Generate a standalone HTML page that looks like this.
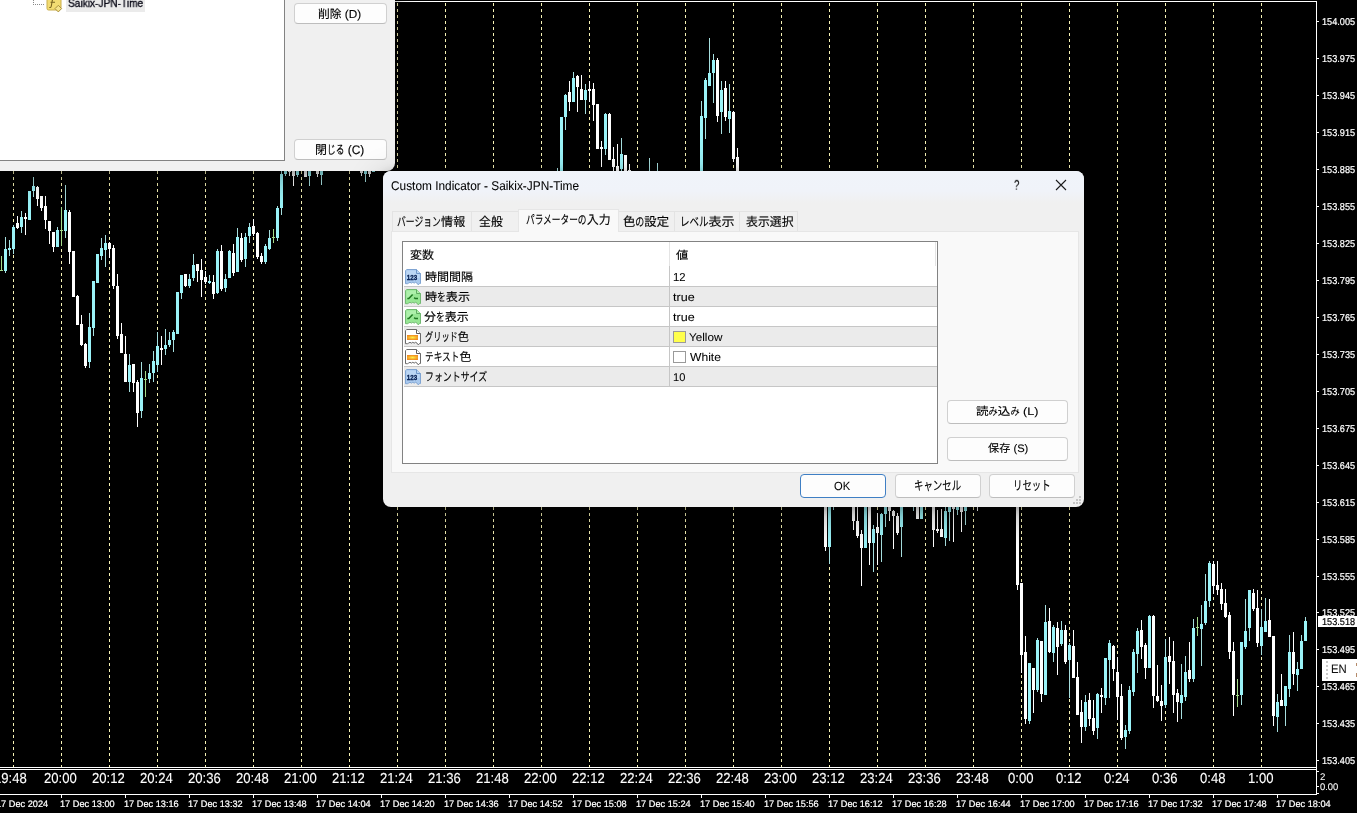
<!DOCTYPE html>
<html lang="ja"><head><meta charset="utf-8"><title>Custom Indicator - Saikix-JPN-Time</title>
<style>
html,body{margin:0;padding:0;background:#000;}
body{width:1357px;height:813px;position:relative;overflow:hidden;font-family:"Liberation Sans","Noto Sans CJK JP",sans-serif;}
#root{position:absolute;left:0;top:0;width:1357px;height:813px;overflow:hidden;will-change:transform;}
.chart{position:absolute;left:0;top:0;}
.t{position:absolute;white-space:nowrap;line-height:1;transform-origin:0 0;}
.ui{font-family:"Liberation Sans","Noto Sans CJK JP",sans-serif;}
.ar{font-family:"Liberation Sans",sans-serif;}
.abs{position:absolute;box-sizing:border-box;}
.btn{position:absolute;box-sizing:border-box;background:#fdfdfd;border:1px solid #d0d0d0;border-bottom-color:#bdbdbd;border-radius:4px;}
.tab{position:absolute;box-sizing:border-box;background:#f0f0f0;border:1px solid #e3e3e3;border-bottom:none;}
.ic{position:absolute;left:405px;}
.k{display:inline-block;white-space:nowrap}.k>i{display:inline-block;font-style:normal;transform:scaleX(0.73);transform-origin:0 50%}
</style></head><body><div id="root">
<svg class="chart" width="1357" height="813" viewBox="0 0 1357 813" shape-rendering="crispEdges">
<path d="M13.5 3V767M61.5 3V767M109.5 3V767M157.5 3V767M205.5 3V767M253.5 3V767M301.5 3V767M349.5 3V767M397.5 3V767M445.5 3V767M493.5 3V767M541.5 3V767M589.5 3V767M637.5 3V767M685.5 3V767M733.5 3V767M781.5 3V767M829.5 3V767M877.5 3V767M925.5 3V767M973.5 3V767M1021.5 3V767M1069.5 3V767M1117.5 3V767M1165.5 3V767M1213.5 3V767M1261.5 3V767" stroke="#f5f1b4" stroke-width="1" stroke-dasharray="3 3" fill="none"/>
<path d="M5.5 237V249M5.5 271V273M9.5 240V248M9.5 250V256M13.5 225V227M13.5 249V254M21.5 211V217M21.5 227V233M33.5 177V186M33.5 191V197M57.5 227V230M65.5 185V210M65.5 231V238M89.5 313V327M89.5 362V368M93.5 328V336M101.5 238V248M101.5 256V260M105.5 235V243M105.5 250V267M129.5 354V365M129.5 382V392M141.5 362V378M141.5 411V418M149.5 364V373M149.5 379V383M153.5 351V361M153.5 373V382M157.5 332V346M157.5 365V372M165.5 329V345M165.5 349V355M169.5 332V340M169.5 345V347M173.5 330V332M173.5 340V352M181.5 293V299M189.5 274V279M189.5 286V288M193.5 254V265M193.5 278V281M209.5 275V281M209.5 283V284M217.5 249V251M217.5 293V294M225.5 274V279M225.5 288V292M229.5 250V251M237.5 228V237M245.5 233V237M245.5 259V267M249.5 223V227M249.5 236V243M265.5 244V246M265.5 262V264M269.5 230V238M269.5 249V250M277.5 206V208M277.5 238V241M281.5 168V174M281.5 208V215M285.5 174V176M297.5 175V177M309.5 176V186M321.5 175V185M365.5 174V182M557.5 168V172M565.5 94V95M565.5 117V130M573.5 72V78M585.5 84V90M585.5 100V114M605.5 113V114M605.5 149V155M621.5 138V154M621.5 169V175M649.5 158V172M657.5 163V172M701.5 101V116M705.5 78V80M705.5 118V139M709.5 38V73M713.5 54V60M713.5 73V103M721.5 81V90M721.5 112V134M729.5 84V111M729.5 119V133M829.5 547V564M833.5 503V510M873.5 525V529M873.5 543V572M881.5 513V514M881.5 535V562M885.5 514V527M901.5 527V557M913.5 503V511M945.5 505V511M945.5 538V546M949.5 512V541M957.5 510V515M965.5 511V525M1029.5 721V724M1037.5 638V640M1037.5 690V692M1045.5 605V622M1053.5 625V627M1053.5 653V662M1061.5 621V630M1061.5 644V646M1069.5 643V645M1069.5 660V698M1085.5 695V702M1085.5 727V731M1097.5 693V694M1097.5 728V739M1105.5 698V705M1109.5 640V643M1109.5 660V698M1125.5 725V730M1125.5 737V749M1129.5 686V690M1129.5 731V734M1133.5 649V652M1133.5 692V696M1137.5 628V631M1137.5 654V673M1149.5 615V616M1165.5 639V657M1165.5 705V708M1181.5 664V695M1181.5 703V719M1185.5 656V672M1185.5 697V701M1193.5 619V628M1193.5 679V682M1201.5 605V624M1201.5 629V666M1205.5 574V601M1205.5 623V625M1209.5 561V563M1209.5 601V607M1241.5 695V705M1245.5 599V631M1245.5 647V649M1249.5 628V641M1261.5 609V627M1261.5 646V655M1265.5 598V621M1277.5 694V702M1277.5 717V732M1285.5 706V726M1289.5 635V652M1289.5 689V697M1297.5 662V669M1297.5 675V691M1301.5 635V641M1305.5 617V621" stroke="#a6dede" stroke-width="1" fill="none"/>
<path d="M17.5 216V223M17.5 228V229M25.5 213V217M25.5 219V235M37.5 186V187M37.5 199V206M41.5 208V211M45.5 196V206M45.5 220V229M49.5 231V244M53.5 247V252M69.5 210V212M69.5 252V264M77.5 295V296M81.5 315V324M81.5 345V346M85.5 343V344M85.5 366V368M109.5 242V243M109.5 249V258M113.5 245V248M113.5 286V289M117.5 274V286M117.5 336V339M121.5 323V334M125.5 336V354M133.5 383V392M137.5 380V382M137.5 413V427M161.5 336V348M161.5 350V365M185.5 286V287M197.5 271V282M201.5 259V270M201.5 280V297M205.5 271V277M205.5 282V284M213.5 275V282M213.5 294V299M221.5 245V251M221.5 289V291M233.5 244V253M233.5 273V276M241.5 233V238M241.5 260V262M253.5 219V226M253.5 234V236M257.5 232V233M257.5 257V259M261.5 253V256M261.5 262V264M289.5 172V176M293.5 176V186M317.5 174V177M361.5 173V176M369.5 174V177M569.5 81V92M569.5 102V111M577.5 75V76M577.5 87V112M581.5 75V89M589.5 81V89M589.5 91V102M593.5 83V89M593.5 105V121M601.5 141V147M601.5 149V167M609.5 113V114M613.5 147V159M613.5 167V175M617.5 144V166M629.5 164V170M717.5 58V60M717.5 116V122M725.5 81V88M725.5 117V121M733.5 111V112M733.5 159V162M737.5 148V157M825.5 547V551M853.5 521V530M857.5 500V521M857.5 536V538M861.5 530V534M861.5 548V586M869.5 543V565M877.5 513V527M877.5 533V565M889.5 511V521M893.5 510V511M893.5 516V549M897.5 513V516M897.5 533V535M933.5 530V547M937.5 510V529M937.5 531V533M941.5 509V529M953.5 509V542M961.5 512V532M977.5 503V511M1017.5 585V590M1021.5 655V673M1025.5 636V652M1025.5 719V724M1033.5 690V713M1041.5 694V702M1049.5 608V621M1049.5 652V653M1057.5 622V628M1057.5 647V675M1065.5 625V630M1065.5 662V664M1073.5 630V646M1077.5 662V677M1081.5 700V712M1081.5 727V743M1089.5 693V700M1089.5 719V726M1093.5 700V718M1093.5 731V735M1101.5 688V695M1101.5 697V713M1113.5 645V646M1113.5 669V681M1117.5 657V672M1117.5 697V720M1121.5 684V696M1121.5 738V740M1141.5 620V630M1141.5 647V659M1145.5 643V645M1145.5 668V679M1153.5 615V616M1153.5 696V708M1157.5 665V696M1157.5 701V702M1161.5 685V701M1161.5 706V721M1169.5 637V656M1169.5 662V684M1173.5 641V661M1173.5 695V713M1177.5 689V693M1177.5 702V722M1189.5 642V670M1189.5 679V682M1213.5 561V564M1213.5 586V594M1217.5 561V585M1217.5 590V595M1221.5 583V589M1221.5 604V610M1225.5 589V603M1225.5 617V618M1229.5 612V615M1229.5 652V659M1233.5 642V651M1233.5 695V716M1253.5 589V593M1253.5 609V611M1257.5 590V608M1257.5 643V647M1269.5 599V620M1273.5 716V726M1281.5 674V700M1293.5 632V652M1293.5 674V685" stroke="#ffffff" stroke-width="1" fill="none"/>
<path d="M1.5 256V271M0 270.5H3M61.5 207V246M60 230.5H63M145.5 371V397M144 379.5H147M273.5 229V243M272 237.5H275M1197.5 617V636M1196 627.5H1199M1237.5 679V707M1236 695.5H1239" stroke="#a4da8a" stroke-width="1" fill="none"/>
<path d="M4 249h3V271h-3zM8 248h3V250h-3zM12 227h3V249h-3zM20 217h3V227h-3zM28 191h3V220h-3zM32 186h3V191h-3zM56 230h3V247h-3zM64 210h3V231h-3zM88 327h3V362h-3zM92 281h3V328h-3zM96 254h3V283h-3zM100 248h3V256h-3zM104 243h3V250h-3zM128 365h3V382h-3zM140 378h3V411h-3zM148 373h3V379h-3zM152 361h3V373h-3zM156 346h3V365h-3zM164 345h3V349h-3zM168 340h3V345h-3zM172 332h3V340h-3zM176 292h3V334h-3zM180 275h3V293h-3zM188 279h3V286h-3zM192 265h3V278h-3zM208 281h3V283h-3zM216 251h3V293h-3zM224 279h3V288h-3zM228 251h3V278h-3zM236 237h3V272h-3zM244 237h3V259h-3zM248 227h3V236h-3zM264 246h3V262h-3zM268 238h3V249h-3zM276 208h3V238h-3zM280 174h3V208h-3zM284 160h3V174h-3zM296 160h3V175h-3zM308 160h3V176h-3zM320 160h3V175h-3zM364 160h3V174h-3zM372 160h3V172h-3zM556 172h3V175h-3zM560 117h3V175h-3zM564 95h3V117h-3zM572 78h3V102h-3zM584 90h3V100h-3zM604 114h3V149h-3zM620 154h3V169h-3zM648 172h3V175h-3zM656 172h3V175h-3zM700 116h3V175h-3zM704 80h3V118h-3zM708 73h3V86h-3zM712 60h3V73h-3zM720 90h3V112h-3zM728 111h3V119h-3zM828 500h3V547h-3zM832 500h3V503h-3zM864 500h3V548h-3zM872 529h3V543h-3zM880 514h3V535h-3zM884 500h3V514h-3zM900 500h3V527h-3zM912 500h3V503h-3zM920 500h3V519h-3zM944 511h3V538h-3zM948 500h3V512h-3zM956 500h3V510h-3zM964 500h3V511h-3zM1028 663h3V721h-3zM1036 640h3V690h-3zM1044 622h3V695h-3zM1052 627h3V653h-3zM1060 630h3V644h-3zM1068 645h3V660h-3zM1084 702h3V727h-3zM1096 694h3V728h-3zM1104 658h3V698h-3zM1108 643h3V660h-3zM1124 730h3V737h-3zM1128 690h3V731h-3zM1132 652h3V692h-3zM1136 631h3V654h-3zM1148 616h3V668h-3zM1164 657h3V705h-3zM1180 695h3V703h-3zM1184 672h3V697h-3zM1192 628h3V679h-3zM1200 624h3V629h-3zM1204 601h3V623h-3zM1208 563h3V601h-3zM1240 642h3V695h-3zM1244 631h3V647h-3zM1248 590h3V628h-3zM1260 627h3V646h-3zM1264 621h3V632h-3zM1276 702h3V717h-3zM1284 686h3V706h-3zM1288 652h3V689h-3zM1296 669h3V675h-3zM1300 641h3V669h-3zM1304 621h3V641h-3z" fill="#9af3f8"/>
<path d="M16 223h3V228h-3zM24 217h3V219h-3zM36 187h3V199h-3zM40 196h3V208h-3zM44 206h3V220h-3zM48 221h3V231h-3zM52 232h3V247h-3zM68 212h3V252h-3zM72 251h3V297h-3zM76 296h3V325h-3zM80 324h3V345h-3zM84 344h3V366h-3zM108 243h3V249h-3zM112 248h3V286h-3zM116 286h3V336h-3zM120 334h3V353h-3zM124 354h3V382h-3zM132 364h3V383h-3zM136 382h3V413h-3zM160 348h3V350h-3zM184 274h3V286h-3zM196 264h3V271h-3zM200 270h3V280h-3zM204 277h3V282h-3zM212 282h3V294h-3zM220 251h3V289h-3zM232 253h3V273h-3zM240 238h3V260h-3zM252 226h3V234h-3zM256 233h3V257h-3zM260 256h3V262h-3zM288 160h3V172h-3zM292 160h3V176h-3zM304 160h3V177h-3zM316 160h3V174h-3zM360 160h3V173h-3zM368 160h3V174h-3zM568 92h3V102h-3zM576 76h3V87h-3zM580 89h3V100h-3zM588 89h3V91h-3zM592 89h3V105h-3zM596 104h3V149h-3zM600 147h3V149h-3zM608 114h3V160h-3zM612 159h3V167h-3zM616 166h3V175h-3zM624 155h3V175h-3zM628 170h3V175h-3zM716 60h3V116h-3zM724 88h3V117h-3zM732 112h3V159h-3zM736 157h3V175h-3zM824 500h3V547h-3zM852 500h3V521h-3zM856 521h3V536h-3zM860 534h3V548h-3zM868 500h3V543h-3zM876 527h3V533h-3zM888 500h3V511h-3zM892 511h3V516h-3zM896 516h3V533h-3zM916 500h3V519h-3zM932 500h3V530h-3zM936 529h3V531h-3zM940 529h3V537h-3zM952 500h3V509h-3zM960 500h3V512h-3zM976 500h3V503h-3zM1016 500h3V585h-3zM1020 583h3V655h-3zM1024 652h3V719h-3zM1032 668h3V690h-3zM1040 641h3V694h-3zM1048 621h3V652h-3zM1056 628h3V647h-3zM1064 630h3V662h-3zM1072 646h3V678h-3zM1076 677h3V715h-3zM1080 712h3V727h-3zM1088 700h3V719h-3zM1092 718h3V731h-3zM1100 695h3V697h-3zM1112 646h3V669h-3zM1116 672h3V697h-3zM1120 696h3V738h-3zM1140 630h3V647h-3zM1144 645h3V668h-3zM1152 616h3V696h-3zM1156 696h3V701h-3zM1160 701h3V706h-3zM1168 656h3V662h-3zM1172 661h3V695h-3zM1176 693h3V702h-3zM1188 670h3V679h-3zM1212 564h3V586h-3zM1216 585h3V590h-3zM1220 589h3V604h-3zM1224 603h3V617h-3zM1228 615h3V652h-3zM1232 651h3V695h-3zM1252 593h3V609h-3zM1256 608h3V643h-3zM1268 620h3V637h-3zM1272 636h3V716h-3zM1280 700h3V706h-3zM1292 652h3V674h-3z" fill="#ffffff"/>
<path d="M0 1.5H1317 M1316.5 1V795 M0 767.5H1317 M0 769.5H1317 M0 794.5H1317 M1317 21.5H1319 M1317 58.5H1319 M1317 95.5H1319 M1317 132.5H1319 M1317 169.5H1319 M1317 206.5H1319 M1317 243.5H1319 M1317 280.5H1319 M1317 317.5H1319 M1317 354.5H1319 M1317 391.5H1319 M1317 428.5H1319 M1317 465.5H1319 M1317 502.5H1319 M1317 539.5H1319 M1317 576.5H1319 M1317 612.5H1319 M1317 649.5H1319 M1317 686.5H1319 M1317 723.5H1319 M1317 760.5H1319 M1317 771.5H1319 M1317 786.5H1319 M1317 793.5H1319 M-3.5 795V798 M61.5 795V798 M125.5 795V798 M189.5 795V798 M253.5 795V798 M317.5 795V798 M381.5 795V798 M445.5 795V798 M509.5 795V798 M573.5 795V798 M637.5 795V798 M701.5 795V798 M765.5 795V798 M829.5 795V798 M893.5 795V798 M957.5 795V798 M1021.5 795V798 M1085.5 795V798 M1149.5 795V798 M1213.5 795V798 M1277.5 795V798" stroke="#ffffff" stroke-width="1" fill="none"/>
</svg>
<div class="abs" style="left:1318px;top:616px;width:39px;height:11px;background:#fff"></div>
<div class="abs" style="left:1322px;top:659px;width:35px;height:22px;background:#fff"></div>
<div class="abs" style="left:1326px;top:661px;width:2px;height:18px;background:repeating-linear-gradient(#c9c9c9 0 2px,#fff 2px 4px)"></div>
<div class="abs" style="left:1356px;top:663px;width:1px;height:3px;background:#b58a6a"></div>
<div class="abs" style="left:1356px;top:673px;width:1px;height:4px;background:#b58a6a"></div>
<div class="abs" style="left:-20px;top:-20px;width:415px;height:191px;background:#f0f0f0;border-radius:0 0 8px 0;box-shadow:0 8px 32px rgba(0,0,0,.30),0 2px 10px rgba(0,0,0,.22)"></div>
<div class="abs" style="left:-20px;top:-20px;width:305px;height:181px;background:#fff;border:1px solid #828282"></div>
<div class="abs" style="left:66px;top:0;width:79px;height:11.5px;background:#ebebeb"></div>
<svg class="abs" style="left:30px;top:0" width="34" height="13" viewBox="0 0 34 13"><path d="M3.5 0V4M3 4.5H14" stroke="#8a8a8a" stroke-dasharray="1 1" fill="none"/><path d="M17 -2H29.5Q31 -2 31 -.5V7.5L28.5 10H18.5Q17 10 17 8.5z" fill="#f3dc72" stroke="#c9ae4c"/><path d="M28.3 5.3L31.6 8.6 28.3 11.9 25 8.6z" fill="#f6e38a" stroke="#a88f3c"/><path d="M25 -1Q22.5 -1.5 22.2 1L21.3 6Q21 8 19.3 7.4M20.5 2.2H25" fill="none" stroke="#7a6420" stroke-width="1.1"/></svg>
<div class="btn" style="left:294px;top:3px;width:93px;height:21px"></div>
<div class="btn" style="left:294px;top:139px;width:93px;height:21px"></div>
<div class="abs" style="left:383px;top:171px;width:701px;height:336px;background:#f0f0f0;border-radius:8px;box-shadow:0 10px 36px rgba(0,0,0,.32),0 2px 10px rgba(0,0,0,.22);overflow:hidden"><div class="abs" style="left:0;top:0;width:701px;height:34px;background:linear-gradient(#f0f4fa 0,#f0f3f9 20px,#f0f0f0 32px)"></div></div>
<svg class="abs" style="left:1054px;top:178px" width="14" height="14" viewBox="0 0 14 14"><path d="M2 2L12 12M12 2L2 12" stroke="#1b1b1b" stroke-width="1.1" fill="none"/></svg>
<div class="abs" style="left:391px;top:231px;width:688px;height:242px;background:#f9f9f9;border:1px solid #e6e6e6"></div>
<div class="tab" style="left:392px;top:211px;width:80px;height:20px"></div>
<div class="tab" style="left:471px;top:211px;width:48px;height:20px"></div>
<div class="tab" style="left:618px;top:211px;width:57px;height:20px"></div>
<div class="tab" style="left:674px;top:211px;width:66px;height:20px"></div>
<div class="tab" style="left:739px;top:211px;width:59px;height:20px"></div>
<div class="abs" style="left:518px;top:209px;width:101px;height:23px;background:#f9f9f9;border:1px solid #e6e6e6;border-bottom:none"></div>
<div class="abs" style="left:402px;top:241px;width:536px;height:223px;background:#fff;border:1px solid #828282"></div>
<div class="abs" style="left:404px;top:267px;width:532.5px;height:20px;background:#fff;border-bottom:1px solid #c6c6c6"></div>
<div class="abs" style="left:404px;top:287px;width:532.5px;height:20px;background:#ebebeb;border-bottom:1px solid #c6c6c6"></div>
<div class="abs" style="left:404px;top:307px;width:532.5px;height:20px;background:#fff;border-bottom:1px solid #c6c6c6"></div>
<div class="abs" style="left:404px;top:327px;width:532.5px;height:20px;background:#ebebeb;border-bottom:1px solid #c6c6c6"></div>
<div class="abs" style="left:404px;top:347px;width:532.5px;height:20px;background:#fff;border-bottom:1px solid #c6c6c6"></div>
<div class="abs" style="left:404px;top:367px;width:532.5px;height:20px;background:#ebebeb;border-bottom:1px solid #c6c6c6"></div>
<div class="abs" style="left:669px;top:242px;width:1px;height:24px;background:#e4e4e4"></div>
<div class="abs" style="left:935px;top:242px;width:1px;height:24px;background:#e4e4e4"></div>
<div class="abs" style="left:669px;top:266px;width:1px;height:121px;background:#c6c6c6"></div>
<svg class="ic" style="top:269px" viewBox="0 0 16 16" width="16" height="16"><path d="M1.7 .5H11.5L15.5 4.5V14.5H14.5L13.3 15.9 12 14.1 10.6 13.3 9.2 14.1 7.8 13.3 6.4 14.1 5 13.3 3.6 14.1 2.6 14.7H.5V1.7z" fill="#a9c9ee" stroke="#7fa4d2"/><path d="M1.5 1.5H11V5H14.5V9H1.5z" fill="#c3dbf6" opacity=".7"/><path d="M11.5 .5V4.5H15.5" fill="#bcd6f3" stroke="#6f97c9"/><text x="7" y="11.2" text-anchor="middle" font-family="Liberation Sans,sans-serif" font-weight="bold" font-size="7" fill="#061f52" stroke="#061f52" stroke-width=".3" textLength="10.4" lengthAdjust="spacingAndGlyphs">123</text></svg>
<svg class="ic" style="top:289px" viewBox="0 0 16 16" width="16" height="16"><path d="M1.7 .5H11.5L15.5 4.5V14.5H14.5L13.3 15.9 12 14.1 10.6 13.3 9.2 14.1 7.8 13.3 6.4 14.1 5 13.3 3.6 14.1 2.6 14.7H.5V1.7z" fill="#97e694" stroke="#72b972"/><path d="M1.5 1.5H11V5H8L3 10H1.5z" fill="#b4f3b0" opacity=".8"/><path d="M11.5 .5V4.5H15.5" fill="#b0f0ac" stroke="#5fae60"/><path d="M2.3 9.5H3.8L7.6 5.5" fill="none" stroke="#1f7a22" stroke-width="1.5"/><path d="M9.2 8.7L10.2 9.5H13" fill="none" stroke="#1f7a22" stroke-width="1.5"/></svg>
<svg class="ic" style="top:309px" viewBox="0 0 16 16" width="16" height="16"><path d="M1.7 .5H11.5L15.5 4.5V14.5H14.5L13.3 15.9 12 14.1 10.6 13.3 9.2 14.1 7.8 13.3 6.4 14.1 5 13.3 3.6 14.1 2.6 14.7H.5V1.7z" fill="#97e694" stroke="#72b972"/><path d="M1.5 1.5H11V5H8L3 10H1.5z" fill="#b4f3b0" opacity=".8"/><path d="M11.5 .5V4.5H15.5" fill="#b0f0ac" stroke="#5fae60"/><path d="M2.3 9.5H3.8L7.6 5.5" fill="none" stroke="#1f7a22" stroke-width="1.5"/><path d="M9.2 8.7L10.2 9.5H13" fill="none" stroke="#1f7a22" stroke-width="1.5"/></svg>
<svg class="ic" style="top:329px" viewBox="0 0 16 16" width="16" height="16"><defs><radialGradient id="ogo1" cx=".5" cy=".5" r=".6" gradientTransform="matrix(1 0 0 .8 0 .1)"><stop offset="0" stop-color="#fff04a"/><stop offset=".55" stop-color="#f7b52e"/><stop offset="1" stop-color="#ee8c22"/></radialGradient></defs><path d="M1.7 .5H11.5L15.5 4.5V14.5H14.5L13.3 15.9 12 14.1 10.6 13.3 9.2 14.1 7.8 13.3 6.4 14.1 5 13.3 3.6 14.1 2.6 14.7H.5V1.7z" fill="#ffffff" stroke="#6a6a6a"/><path d="M11.5 .5V4.5H15.5" fill="#fff" stroke="#5c5c5c"/><rect x="2" y="6" width="11" height="5" fill="url(#ogo1)"/></svg>
<svg class="ic" style="top:349px" viewBox="0 0 16 16" width="16" height="16"><defs><radialGradient id="ogo2" cx=".5" cy=".5" r=".6" gradientTransform="matrix(1 0 0 .8 0 .1)"><stop offset="0" stop-color="#fff04a"/><stop offset=".55" stop-color="#f7b52e"/><stop offset="1" stop-color="#ee8c22"/></radialGradient></defs><path d="M1.7 .5H11.5L15.5 4.5V14.5H14.5L13.3 15.9 12 14.1 10.6 13.3 9.2 14.1 7.8 13.3 6.4 14.1 5 13.3 3.6 14.1 2.6 14.7H.5V1.7z" fill="#ffffff" stroke="#6a6a6a"/><path d="M11.5 .5V4.5H15.5" fill="#fff" stroke="#5c5c5c"/><rect x="2" y="6" width="11" height="5" fill="url(#ogo2)"/></svg>
<svg class="ic" style="top:369px" viewBox="0 0 16 16" width="16" height="16"><path d="M1.7 .5H11.5L15.5 4.5V14.5H14.5L13.3 15.9 12 14.1 10.6 13.3 9.2 14.1 7.8 13.3 6.4 14.1 5 13.3 3.6 14.1 2.6 14.7H.5V1.7z" fill="#a9c9ee" stroke="#7fa4d2"/><path d="M1.5 1.5H11V5H14.5V9H1.5z" fill="#c3dbf6" opacity=".7"/><path d="M11.5 .5V4.5H15.5" fill="#bcd6f3" stroke="#6f97c9"/><text x="7" y="11.2" text-anchor="middle" font-family="Liberation Sans,sans-serif" font-weight="bold" font-size="7" fill="#061f52" stroke="#061f52" stroke-width=".3" textLength="10.4" lengthAdjust="spacingAndGlyphs">123</text></svg>
<div class="abs" style="left:673px;top:331px;width:12.5px;height:12px;background:#ffff4d;border:1px solid #9a9a9a"></div>
<div class="abs" style="left:673px;top:351px;width:12.5px;height:12px;background:#fff;border:1px solid #9a9a9a"></div>
<div class="btn" style="left:947px;top:400px;width:121px;height:24px"></div>
<div class="btn" style="left:947px;top:437px;width:121px;height:24px"></div>
<div class="btn" style="left:800px;top:474px;width:86px;height:24px;border-color:#3f7fc4"></div>
<div class="btn" style="left:895px;top:474px;width:86px;height:24px"></div>
<div class="btn" style="left:989px;top:474px;width:86px;height:24px"></div>
<svg class="abs" style="left:1071px;top:494px" width="12" height="12" viewBox="0 0 12 12"><path d="M8 2h2v2h-2zM5 5h2v2h-2zM8 5h2v2h-2zM2 8h2v2h-2zM5 8h2v2h-2zM8 8h2v2h-2z" fill="#c4c4c4"/></svg>
<span class="t ui" style="left:391.25px;top:179.00px;font-size:12px;color:#000000;transform:matrix(0.9886,0,0.001,1.0556,0,0);-webkit-text-stroke:0.06px;">Custom Indicator - Saikix-JPN-Time</span>
<span class="t ui" style="left:397.25px;top:216.00px;font-size:12px;color:#000000;transform:matrix(1.0060,0,0.001,1.0222,0,0);-webkit-text-stroke:0.14px;"><span class="k" style="width:43.8px"><i>バージョン</i></span>情報</span>
<span class="t ui" style="left:478.50px;top:216.00px;font-size:12px;color:#000000;transform:matrix(0.9892,0,0.001,1.0222,0,0);-webkit-text-stroke:0.14px;">全般</span>
<span class="t ui" style="left:526.25px;top:214.00px;font-size:12px;color:#000000;transform:matrix(0.9910,0,0.001,1.0222,0,0);-webkit-text-stroke:0.14px;"><span class="k" style="width:61.32px"><i>パラメーターの</i></span>入力</span>
<span class="t ui" style="left:623.25px;top:216.00px;font-size:12px;color:#000000;transform:matrix(1.0263,0,0.001,1.0222,0,0);-webkit-text-stroke:0.14px;">色<span class="k" style="width:8.76px"><i>の</i></span>設定</span>
<span class="t ui" style="left:679.50px;top:216.00px;font-size:12px;color:#000000;transform:matrix(1.0869,0,0.001,1.0222,0,0);-webkit-text-stroke:0.14px;"><span class="k" style="width:26.28px"><i>レベル</i></span>表示</span>
<span class="t ui" style="left:746.25px;top:216.00px;font-size:12px;color:#000000;transform:matrix(0.9895,0,0.001,1.0222,0,0);-webkit-text-stroke:0.14px;">表示選択</span>
<span class="t ui" style="left:410.25px;top:249.00px;font-size:12px;color:#000000;transform:matrix(0.9978,0,0.001,0.9511,0,0);-webkit-text-stroke:0.14px;">変数</span>
<span class="t ui" style="left:676.00px;top:250.00px;font-size:12px;color:#000000;transform:matrix(1.0222,0,0.001,0.9244,0,0);-webkit-text-stroke:0.14px;">値</span>
<span class="t ui" style="left:425.00px;top:271.00px;font-size:12px;color:#000000;transform:matrix(1.0022,0,0.001,0.9778,0,0);-webkit-text-stroke:0.14px;">時間間隔</span>
<span class="t ui" style="left:425.00px;top:291.00px;font-size:12px;color:#000000;transform:matrix(1.0046,0,0.001,0.9778,0,0);-webkit-text-stroke:0.14px;">時<span class="k" style="width:8.76px"><i>を</i></span>表示</span>
<span class="t ui" style="left:424.00px;top:311.00px;font-size:12px;color:#000000;transform:matrix(0.9977,0,0.001,0.9778,0,0);-webkit-text-stroke:0.14px;">分<span class="k" style="width:8.76px"><i>を</i></span>表示</span>
<span class="t ui" style="left:425.25px;top:331.00px;font-size:12px;color:#000000;transform:matrix(0.9348,0,0.001,0.9778,0,0);-webkit-text-stroke:0.14px;"><span class="k" style="width:35.04px"><i>グリッド</i></span>色</span>
<span class="t ui" style="left:425.00px;top:351.00px;font-size:12px;color:#000000;transform:matrix(0.9880,0,0.001,0.9778,0,0);-webkit-text-stroke:0.14px;"><span class="k" style="width:35.04px"><i>テキスト</i></span>色</span>
<span class="t ui" style="left:424.50px;top:371.00px;font-size:12px;color:#000000;transform:matrix(1.0168,0,0.001,1.0000,0,0);-webkit-text-stroke:0.14px;"><span class="k" style="width:61.32px"><i>フォントサイズ</i></span></span>
<span class="t ui" style="left:673.00px;top:271.00px;font-size:12px;color:#000000;transform:matrix(0.9447,0,0.001,0.9647,0,0);-webkit-text-stroke:0.06px;">12</span>
<span class="t ui" style="left:673.00px;top:291.00px;font-size:12px;color:#000000;transform:matrix(1.0450,0,0.001,0.9625,0,0);-webkit-text-stroke:0.06px;">true</span>
<span class="t ui" style="left:673.00px;top:311.00px;font-size:12px;color:#000000;transform:matrix(1.0450,0,0.001,0.9625,0,0);-webkit-text-stroke:0.06px;">true</span>
<span class="t ui" style="left:689.25px;top:332.00px;font-size:12px;color:#000000;transform:matrix(0.9765,0,0.001,0.9333,0,0);-webkit-text-stroke:0.06px;">Yellow</span>
<span class="t ui" style="left:689.50px;top:351.00px;font-size:12px;color:#000000;transform:matrix(1.0083,0,0.001,0.9556,0,0);-webkit-text-stroke:0.06px;">White</span>
<span class="t ui" style="left:673.00px;top:372.00px;font-size:12px;color:#000000;transform:matrix(0.9250,0,0.001,0.9371,0,0);-webkit-text-stroke:0.06px;">10</span>
<span class="t ui" style="left:975.75px;top:406.00px;font-size:12px;color:#000000;transform:matrix(1.0468,0,0.001,0.9098,0,0);-webkit-text-stroke:0.14px;">読<span class="k" style="width:8.76px"><i>み</i></span>込<span class="k" style="width:8.76px"><i>み</i></span> (L)</span>
<span class="t ui" style="left:987.50px;top:443.00px;font-size:12px;color:#000000;transform:matrix(0.9294,0,0.001,0.9098,0,0);-webkit-text-stroke:0.14px;">保存 (S)</span>
<span class="t ui" style="left:834.25px;top:480.00px;font-size:12px;color:#000000;transform:matrix(0.9313,0,0.001,0.9829,0,0);-webkit-text-stroke:0.06px;">OK</span>
<span class="t ui" style="left:914.25px;top:480.00px;font-size:12px;color:#000000;transform:matrix(1.0753,0,0.001,1.0419,0,0);-webkit-text-stroke:0.14px;"><span class="k" style="width:43.8px"><i>キャンセル</i></span></span>
<span class="t ui" style="left:1012.75px;top:479.00px;font-size:12px;color:#000000;transform:matrix(1.0719,0,0.001,1.0667,0,0);-webkit-text-stroke:0.14px;"><span class="k" style="width:35.04px"><i>リセット</i></span></span>
<span class="t ui" style="left:1013.75px;top:178.00px;font-size:12px;color:#000000;transform:matrix(0.8000,0,0.001,1.1529,0,0);-webkit-text-stroke:0.06px;">?</span>
<span class="t ui" style="left:317.75px;top:8.00px;font-size:12px;color:#000000;transform:matrix(0.9812,0,0.001,0.9569,0,0);-webkit-text-stroke:0.14px;">削除 (D)</span>
<span class="t ui" style="left:314.50px;top:144.00px;font-size:12px;color:#000000;transform:matrix(0.9948,0,0.001,1.0286,0,0);-webkit-text-stroke:0.14px;">閉<span class="k" style="width:17.52px"><i>じる</i></span> (C)</span>
<span class="t ui" style="left:67.75px;top:-3.00px;font-size:11px;color:#000010;transform:matrix(0.9238,0,0.001,1.0667,0,0);-webkit-text-stroke:0.3px;">Saikix-JPN-Time</span>
<span class="t ar" style="left:1331.25px;top:663.00px;font-size:11px;color:#111111;transform:matrix(1.0327,0,0.001,1.1067,0,0);-webkit-text-stroke:0.06px;">EN</span>
<span class="t ar" style="left:1320.00px;top:773.00px;font-size:9.33px;color:#ffffff;transform:matrix(1.0353,0,0.001,1.0462,0,0);-webkit-text-stroke:0.06px;">2</span>
<span class="t ar" style="left:1320.25px;top:783.00px;font-size:9.33px;color:#ffffff;transform:matrix(1.0057,0,0.001,1.0462,0,0);-webkit-text-stroke:0.06px;">0.00</span>
<span class="t ar" style="left:1322.25px;top:17.00px;font-size:9.88px;color:#fff;transform:matrix(0.9275,0,0.001,1.0000,0,0);-webkit-text-stroke:0.2px;">154.005</span>
<span class="t ar" style="left:1322.25px;top:54.00px;font-size:9.88px;color:#fff;transform:matrix(0.9275,0,0.001,1.0000,0,0);-webkit-text-stroke:0.2px;">153.975</span>
<span class="t ar" style="left:1322.25px;top:91.00px;font-size:9.88px;color:#fff;transform:matrix(0.9275,0,0.001,1.0000,0,0);-webkit-text-stroke:0.2px;">153.945</span>
<span class="t ar" style="left:1322.25px;top:128.00px;font-size:9.88px;color:#fff;transform:matrix(0.9275,0,0.001,1.0000,0,0);-webkit-text-stroke:0.2px;">153.915</span>
<span class="t ar" style="left:1322.25px;top:165.00px;font-size:9.88px;color:#fff;transform:matrix(0.9275,0,0.001,1.0000,0,0);-webkit-text-stroke:0.2px;">153.885</span>
<span class="t ar" style="left:1322.25px;top:202.00px;font-size:9.88px;color:#fff;transform:matrix(0.9275,0,0.001,1.0000,0,0);-webkit-text-stroke:0.2px;">153.855</span>
<span class="t ar" style="left:1322.25px;top:239.00px;font-size:9.88px;color:#fff;transform:matrix(0.9275,0,0.001,1.0000,0,0);-webkit-text-stroke:0.2px;">153.825</span>
<span class="t ar" style="left:1322.25px;top:276.00px;font-size:9.88px;color:#fff;transform:matrix(0.9275,0,0.001,1.0000,0,0);-webkit-text-stroke:0.2px;">153.795</span>
<span class="t ar" style="left:1322.25px;top:313.00px;font-size:9.88px;color:#fff;transform:matrix(0.9275,0,0.001,1.0000,0,0);-webkit-text-stroke:0.2px;">153.765</span>
<span class="t ar" style="left:1322.25px;top:350.00px;font-size:9.88px;color:#fff;transform:matrix(0.9275,0,0.001,1.0000,0,0);-webkit-text-stroke:0.2px;">153.735</span>
<span class="t ar" style="left:1322.25px;top:387.00px;font-size:9.88px;color:#fff;transform:matrix(0.9275,0,0.001,1.0000,0,0);-webkit-text-stroke:0.2px;">153.705</span>
<span class="t ar" style="left:1322.25px;top:424.00px;font-size:9.88px;color:#fff;transform:matrix(0.9275,0,0.001,1.0000,0,0);-webkit-text-stroke:0.2px;">153.675</span>
<span class="t ar" style="left:1322.25px;top:461.00px;font-size:9.88px;color:#fff;transform:matrix(0.9275,0,0.001,1.0000,0,0);-webkit-text-stroke:0.2px;">153.645</span>
<span class="t ar" style="left:1322.25px;top:498.00px;font-size:9.88px;color:#fff;transform:matrix(0.9275,0,0.001,1.0000,0,0);-webkit-text-stroke:0.2px;">153.615</span>
<span class="t ar" style="left:1322.25px;top:535.00px;font-size:9.88px;color:#fff;transform:matrix(0.9275,0,0.001,1.0000,0,0);-webkit-text-stroke:0.2px;">153.585</span>
<span class="t ar" style="left:1322.25px;top:572.00px;font-size:9.88px;color:#fff;transform:matrix(0.9275,0,0.001,1.0000,0,0);-webkit-text-stroke:0.2px;">153.555</span>
<span class="t ar" style="left:1322.25px;top:608.00px;font-size:9.88px;color:#fff;transform:matrix(0.9275,0,0.001,1.0000,0,0);-webkit-text-stroke:0.2px;">153.525</span>
<span class="t ar" style="left:1322.25px;top:645.00px;font-size:9.88px;color:#fff;transform:matrix(0.9275,0,0.001,1.0000,0,0);-webkit-text-stroke:0.2px;">153.495</span>
<span class="t ar" style="left:1322.25px;top:682.00px;font-size:9.88px;color:#fff;transform:matrix(0.9275,0,0.001,1.0000,0,0);-webkit-text-stroke:0.2px;">153.465</span>
<span class="t ar" style="left:1322.25px;top:719.00px;font-size:9.88px;color:#fff;transform:matrix(0.9275,0,0.001,1.0000,0,0);-webkit-text-stroke:0.2px;">153.435</span>
<span class="t ar" style="left:1322.25px;top:756.00px;font-size:9.88px;color:#fff;transform:matrix(0.9275,0,0.001,1.0000,0,0);-webkit-text-stroke:0.2px;">153.405</span>
<span class="t ar" style="left:1322.25px;top:617.00px;font-size:9.88px;color:#000;transform:matrix(0.9275,0,0.001,1.0000,0,0);-webkit-text-stroke:0.2px;">153.518</span>
<span class="t ar" style="left:-5.75px;top:771.00px;font-size:14.51px;color:#fff;transform:matrix(0.9057,0,0.001,1.0000,0,0);-webkit-text-stroke:0.1px;">19:48</span>
<span class="t ar" style="left:44.00px;top:771.00px;font-size:14.51px;color:#fff;transform:matrix(0.9057,0,0.001,1.0000,0,0);-webkit-text-stroke:0.1px;">20:00</span>
<span class="t ar" style="left:92.00px;top:771.00px;font-size:14.51px;color:#fff;transform:matrix(0.9057,0,0.001,1.0000,0,0);-webkit-text-stroke:0.1px;">20:12</span>
<span class="t ar" style="left:140.00px;top:771.00px;font-size:14.51px;color:#fff;transform:matrix(0.9057,0,0.001,1.0000,0,0);-webkit-text-stroke:0.1px;">20:24</span>
<span class="t ar" style="left:188.00px;top:771.00px;font-size:14.51px;color:#fff;transform:matrix(0.9057,0,0.001,1.0000,0,0);-webkit-text-stroke:0.1px;">20:36</span>
<span class="t ar" style="left:236.00px;top:771.00px;font-size:14.51px;color:#fff;transform:matrix(0.9057,0,0.001,1.0000,0,0);-webkit-text-stroke:0.1px;">20:48</span>
<span class="t ar" style="left:284.00px;top:771.00px;font-size:14.51px;color:#fff;transform:matrix(0.9057,0,0.001,1.0000,0,0);-webkit-text-stroke:0.1px;">21:00</span>
<span class="t ar" style="left:332.00px;top:771.00px;font-size:14.51px;color:#fff;transform:matrix(0.9057,0,0.001,1.0000,0,0);-webkit-text-stroke:0.1px;">21:12</span>
<span class="t ar" style="left:380.00px;top:771.00px;font-size:14.51px;color:#fff;transform:matrix(0.9057,0,0.001,1.0000,0,0);-webkit-text-stroke:0.1px;">21:24</span>
<span class="t ar" style="left:428.00px;top:771.00px;font-size:14.51px;color:#fff;transform:matrix(0.9057,0,0.001,1.0000,0,0);-webkit-text-stroke:0.1px;">21:36</span>
<span class="t ar" style="left:476.00px;top:771.00px;font-size:14.51px;color:#fff;transform:matrix(0.9057,0,0.001,1.0000,0,0);-webkit-text-stroke:0.1px;">21:48</span>
<span class="t ar" style="left:524.00px;top:771.00px;font-size:14.51px;color:#fff;transform:matrix(0.9057,0,0.001,1.0000,0,0);-webkit-text-stroke:0.1px;">22:00</span>
<span class="t ar" style="left:572.00px;top:771.00px;font-size:14.51px;color:#fff;transform:matrix(0.9057,0,0.001,1.0000,0,0);-webkit-text-stroke:0.1px;">22:12</span>
<span class="t ar" style="left:620.00px;top:771.00px;font-size:14.51px;color:#fff;transform:matrix(0.9057,0,0.001,1.0000,0,0);-webkit-text-stroke:0.1px;">22:24</span>
<span class="t ar" style="left:668.00px;top:771.00px;font-size:14.51px;color:#fff;transform:matrix(0.9057,0,0.001,1.0000,0,0);-webkit-text-stroke:0.1px;">22:36</span>
<span class="t ar" style="left:716.00px;top:771.00px;font-size:14.51px;color:#fff;transform:matrix(0.9057,0,0.001,1.0000,0,0);-webkit-text-stroke:0.1px;">22:48</span>
<span class="t ar" style="left:764.00px;top:771.00px;font-size:14.51px;color:#fff;transform:matrix(0.9057,0,0.001,1.0000,0,0);-webkit-text-stroke:0.1px;">23:00</span>
<span class="t ar" style="left:812.00px;top:771.00px;font-size:14.51px;color:#fff;transform:matrix(0.9057,0,0.001,1.0000,0,0);-webkit-text-stroke:0.1px;">23:12</span>
<span class="t ar" style="left:860.00px;top:771.00px;font-size:14.51px;color:#fff;transform:matrix(0.9057,0,0.001,1.0000,0,0);-webkit-text-stroke:0.1px;">23:24</span>
<span class="t ar" style="left:908.00px;top:771.00px;font-size:14.51px;color:#fff;transform:matrix(0.9057,0,0.001,1.0000,0,0);-webkit-text-stroke:0.1px;">23:36</span>
<span class="t ar" style="left:956.00px;top:771.00px;font-size:14.51px;color:#fff;transform:matrix(0.9057,0,0.001,1.0000,0,0);-webkit-text-stroke:0.1px;">23:48</span>
<span class="t ar" style="left:1008.25px;top:771.00px;font-size:14.51px;color:#fff;transform:matrix(0.9057,0,0.001,1.0000,0,0);-webkit-text-stroke:0.1px;">0:00</span>
<span class="t ar" style="left:1056.25px;top:771.00px;font-size:14.51px;color:#fff;transform:matrix(0.9057,0,0.001,1.0000,0,0);-webkit-text-stroke:0.1px;">0:12</span>
<span class="t ar" style="left:1104.00px;top:771.00px;font-size:14.51px;color:#fff;transform:matrix(0.9057,0,0.001,1.0000,0,0);-webkit-text-stroke:0.1px;">0:24</span>
<span class="t ar" style="left:1152.25px;top:771.00px;font-size:14.51px;color:#fff;transform:matrix(0.9057,0,0.001,1.0000,0,0);-webkit-text-stroke:0.1px;">0:36</span>
<span class="t ar" style="left:1200.25px;top:771.00px;font-size:14.51px;color:#fff;transform:matrix(0.9057,0,0.001,1.0000,0,0);-webkit-text-stroke:0.1px;">0:48</span>
<span class="t ar" style="left:1248.00px;top:771.00px;font-size:14.51px;color:#fff;transform:matrix(0.9057,0,0.001,1.0000,0,0);-webkit-text-stroke:0.1px;">1:00</span>
<span class="t ar" style="left:-4.25px;top:799.00px;font-size:9.4px;color:#fff;transform:matrix(0.9800,0,0.001,1.0000,0,0);-webkit-text-stroke:0.22px;">17 Dec 2024</span>
<span class="t ar" style="left:60.25px;top:799.00px;font-size:9.4px;color:#fff;transform:matrix(0.9800,0,0.001,1.0000,0,0);-webkit-text-stroke:0.22px;">17 Dec 13:00</span>
<span class="t ar" style="left:124.25px;top:799.00px;font-size:9.4px;color:#fff;transform:matrix(0.9800,0,0.001,1.0000,0,0);-webkit-text-stroke:0.22px;">17 Dec 13:16</span>
<span class="t ar" style="left:188.25px;top:799.00px;font-size:9.4px;color:#fff;transform:matrix(0.9800,0,0.001,1.0000,0,0);-webkit-text-stroke:0.22px;">17 Dec 13:32</span>
<span class="t ar" style="left:252.25px;top:799.00px;font-size:9.4px;color:#fff;transform:matrix(0.9800,0,0.001,1.0000,0,0);-webkit-text-stroke:0.22px;">17 Dec 13:48</span>
<span class="t ar" style="left:316.25px;top:799.00px;font-size:9.4px;color:#fff;transform:matrix(0.9800,0,0.001,1.0000,0,0);-webkit-text-stroke:0.22px;">17 Dec 14:04</span>
<span class="t ar" style="left:380.25px;top:799.00px;font-size:9.4px;color:#fff;transform:matrix(0.9800,0,0.001,1.0000,0,0);-webkit-text-stroke:0.22px;">17 Dec 14:20</span>
<span class="t ar" style="left:444.25px;top:799.00px;font-size:9.4px;color:#fff;transform:matrix(0.9800,0,0.001,1.0000,0,0);-webkit-text-stroke:0.22px;">17 Dec 14:36</span>
<span class="t ar" style="left:508.25px;top:799.00px;font-size:9.4px;color:#fff;transform:matrix(0.9800,0,0.001,1.0000,0,0);-webkit-text-stroke:0.22px;">17 Dec 14:52</span>
<span class="t ar" style="left:572.25px;top:799.00px;font-size:9.4px;color:#fff;transform:matrix(0.9800,0,0.001,1.0000,0,0);-webkit-text-stroke:0.22px;">17 Dec 15:08</span>
<span class="t ar" style="left:636.25px;top:799.00px;font-size:9.4px;color:#fff;transform:matrix(0.9800,0,0.001,1.0000,0,0);-webkit-text-stroke:0.22px;">17 Dec 15:24</span>
<span class="t ar" style="left:700.25px;top:799.00px;font-size:9.4px;color:#fff;transform:matrix(0.9800,0,0.001,1.0000,0,0);-webkit-text-stroke:0.22px;">17 Dec 15:40</span>
<span class="t ar" style="left:764.25px;top:799.00px;font-size:9.4px;color:#fff;transform:matrix(0.9800,0,0.001,1.0000,0,0);-webkit-text-stroke:0.22px;">17 Dec 15:56</span>
<span class="t ar" style="left:828.25px;top:799.00px;font-size:9.4px;color:#fff;transform:matrix(0.9800,0,0.001,1.0000,0,0);-webkit-text-stroke:0.22px;">17 Dec 16:12</span>
<span class="t ar" style="left:892.25px;top:799.00px;font-size:9.4px;color:#fff;transform:matrix(0.9800,0,0.001,1.0000,0,0);-webkit-text-stroke:0.22px;">17 Dec 16:28</span>
<span class="t ar" style="left:956.25px;top:799.00px;font-size:9.4px;color:#fff;transform:matrix(0.9800,0,0.001,1.0000,0,0);-webkit-text-stroke:0.22px;">17 Dec 16:44</span>
<span class="t ar" style="left:1020.25px;top:799.00px;font-size:9.4px;color:#fff;transform:matrix(0.9800,0,0.001,1.0000,0,0);-webkit-text-stroke:0.22px;">17 Dec 17:00</span>
<span class="t ar" style="left:1084.25px;top:799.00px;font-size:9.4px;color:#fff;transform:matrix(0.9800,0,0.001,1.0000,0,0);-webkit-text-stroke:0.22px;">17 Dec 17:16</span>
<span class="t ar" style="left:1148.25px;top:799.00px;font-size:9.4px;color:#fff;transform:matrix(0.9800,0,0.001,1.0000,0,0);-webkit-text-stroke:0.22px;">17 Dec 17:32</span>
<span class="t ar" style="left:1212.25px;top:799.00px;font-size:9.4px;color:#fff;transform:matrix(0.9800,0,0.001,1.0000,0,0);-webkit-text-stroke:0.22px;">17 Dec 17:48</span>
<span class="t ar" style="left:1276.25px;top:799.00px;font-size:9.4px;color:#fff;transform:matrix(0.9800,0,0.001,1.0000,0,0);-webkit-text-stroke:0.22px;">17 Dec 18:04</span>
</div></body></html>
